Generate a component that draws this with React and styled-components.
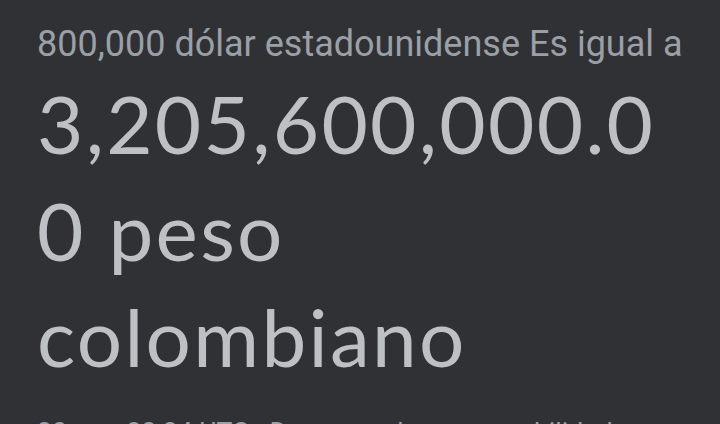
import React from "react";
import styled, { createGlobalStyle } from "styled-components";

const GlobalStyle = createGlobalStyle`
  html, body {
    margin: 0;
    padding: 0;
    background: #303134;
  }
  body {
    font-family: Roboto, "Noto Sans", Arial, sans-serif;
  }
`;

const Card = styled.div`
  display: flex;
  flex-direction: column;
  padding: 20px 37px 0 37px;
  height: 424px;
  box-sizing: border-box;
  overflow: hidden;
`;

const FromLine = styled.div`
  color: #9aa0a6;
  font-family: Roboto, sans-serif;
  font-size: 36px;
  line-height: 48px;
`;

const Result = styled.div`
  color: #bdc1c6;
  font-family: Lato, "Open Sans", sans-serif;
  font-size: 80px;
  line-height: 106.6px;
  margin-top: 2px;
  overflow-wrap: anywhere;
  letter-spacing: ${(p) => p.$spacing}px;
`;

const Meta = styled.div`
  color: #9aa0a6;
  font-family: Roboto, sans-serif;
  font-size: 26.6px;
  line-height: 35.5px;
  margin-top: 24px;
  white-space: nowrap;
`;

const App = () => {
  const amount = "800,000";
  const converted = "3,205,600,000.00";

  return (
    <>
      <GlobalStyle />
      <Card>
        <FromLine>{amount} dólar estadounidense Es igual a</FromLine>
        <Result $spacing={2.3}>{converted} peso colombiano</Result>
        <Meta>20 nov, 23:24 UTC · Descargo de responsabilidad</Meta>
      </Card>
    </>
  );
};

export default App;
